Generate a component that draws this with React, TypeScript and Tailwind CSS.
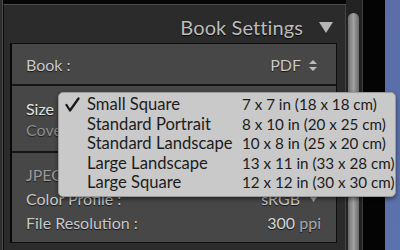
import React from "react";

const sizes = [
  { name: "Small Square", dims: "7 x 7 in (18 x 18 cm)", checked: true },
  { name: "Standard Portrait", dims: "8 x 10 in (20 x 25 cm)" },
  { name: "Standard Landscape", dims: "10 x 8 in (25 x 20 cm)" },
  { name: "Large Landscape", dims: "13 x 11 in (33 x 28 cm)" },
  { name: "Large Square", dims: "12 x 12 in (30 x 30 cm)" },
];

function UpDown() {
  return (
    <svg width="8" height="11" viewBox="0 0 8 11" className="ml-[8px]">
      <path d="M4 0 L8 4 L0 4 Z M0 7 L8 7 L4 11 Z" fill="#bdbdbd" />
    </svg>
  );
}

function Caret() {
  return (
    <svg width="7" height="5" viewBox="0 0 7 5" className="ml-[10px]">
      <path d="M0 0 L7 0 L3.5 5 Z" fill="#a8a8a8" />
    </svg>
  );
}

function Check() {
  return (
    <svg width="15" height="15" viewBox="0 0 15 15">
      <path d="M1.5 8 L5 13.5 L13.5 1.5" stroke="#1a1a1a" strokeWidth="2.3" fill="none" strokeLinecap="round" strokeLinejoin="round" />
    </svg>
  );
}

const label = "text-[16px] leading-none text-[#c9c9c9] [text-shadow:0_1px_1px_rgba(0,0,0,0.7)]";

export default function App() {
  return (
    <div className="relative w-[400px] h-[250px] flex bg-[#060606] overflow-hidden font-['Lato',sans-serif]">
      {/* left edge */}
      <div className="w-[3px] bg-[#2e2e2e] border-r border-[#4a4a4a]" />

      {/* panel */}
      <div className="w-[343px] mt-[4px] flex flex-col bg-[#2b2b2b] border-t border-[#4c4c4c] border-l border-l-[#0a0a0a] border-r border-r-[#454545]">
        <div className="h-[38px] flex justify-end items-start pr-[12px]">
          <span className="mt-[12px] text-[20px] leading-[20px] tracking-[0.1px] text-[#bcbcbc] [text-shadow:0_1px_1px_rgba(0,0,0,0.8)]">
            Book Settings
          </span>
          <svg width="14" height="11" viewBox="0 0 14 11" className="mt-[17px] ml-[16px]">
            <path d="M0 0 L14 0 L7 11 Z" fill="#b5b5b5" />
          </svg>
        </div>

        <div className="ml-[6px] mr-[8px] border border-[#0e0e0e] border-l-2 border-l-[#080808] flex flex-col">
          <div className="h-[42px] bg-[#474747] border-b-2 border-[#151515] flex items-center justify-between pl-[14px] pr-[19px] pt-[2px]">
            <span className={label}>Book :</span>
            <span className="flex items-center">
              <span className={label}>PDF</span>
              <UpDown />
            </span>
          </div>

          <div className="h-[67px] bg-[#474747] border-b-2 border-[#151515] flex flex-col pl-[14px] pt-[12px]">
            <div className="h-[21px] flex items-center">
              <span className="text-[16px] leading-none text-[#e2e2e2] [text-shadow:0_1px_1px_rgba(0,0,0,0.7)]">Size</span>
            </div>
            <div className="h-[21px] flex items-center">
              <span className="text-[16px] leading-none text-[#8e8e8e] [text-shadow:0_1px_1px_rgba(0,0,0,0.6)]">Cover :</span>
            </div>
          </div>

          <div className="h-[89px] bg-[#474747] flex flex-col pl-[14px] pr-[15px] pt-[10px]">
            <div className="h-[24px] flex items-center">
              <span className="text-[16px] leading-none text-[#9a9a9a] [text-shadow:0_1px_1px_rgba(0,0,0,0.6)]">JPEG Quality :</span>
            </div>
            <div className="h-[24px] flex items-center justify-between">
              <span className={label}>Color Profile :</span>
              <span className="flex items-center pr-[4px]">
                <span className={label}>sRGB</span>
                <Caret />
              </span>
            </div>
            <div className="h-[24px] flex items-center justify-between">
              <span className={label}>File Resolution :</span>
              <span className={label}>
                <span className="text-[#d6d6d6]">300</span> <span className="text-[#a9a9a9]">ppi</span>
              </span>
            </div>
          </div>
        </div>
      </div>

      {/* scrollbar */}
      <div className="w-[17px] bg-[#232323] border-r border-[#3e3e3e] pt-[13px] pl-[2px]">
        <div className="w-[11px] h-[260px] rounded-full bg-gradient-to-r from-[#6e6e6e] via-[#a2a2a2] to-[#6a6a6a]" />
      </div>

      <div className="w-[22px] bg-[#040404]" />
      <div className="flex-1 bg-gradient-to-b from-[#5b6ea8] to-[#5a72ad]" />

      {/* popup menu */}
      <div className="absolute left-[58px] top-[92px] w-[338px] h-[105px] bg-[#c9c9c9] rounded-[5px] border border-[#9a9a9a] shadow-[0_2px_4px_rgba(0,0,0,0.5)] pt-[2px] overflow-hidden">
        <div className="grid grid-cols-[28px_155px_1fr] leading-[19.5px] text-[#1c1c1c]">
          {sizes.map((s) => (
            <React.Fragment key={s.name}>
              <div className="flex items-center pl-[6px]">{s.checked ? <Check /> : null}</div>
              <div className="whitespace-nowrap text-[16.6px]">{s.name}</div>
              <div className="whitespace-nowrap text-[15.2px]">{s.dims}</div>
            </React.Fragment>
          ))}
        </div>
      </div>
    </div>
  );
}
